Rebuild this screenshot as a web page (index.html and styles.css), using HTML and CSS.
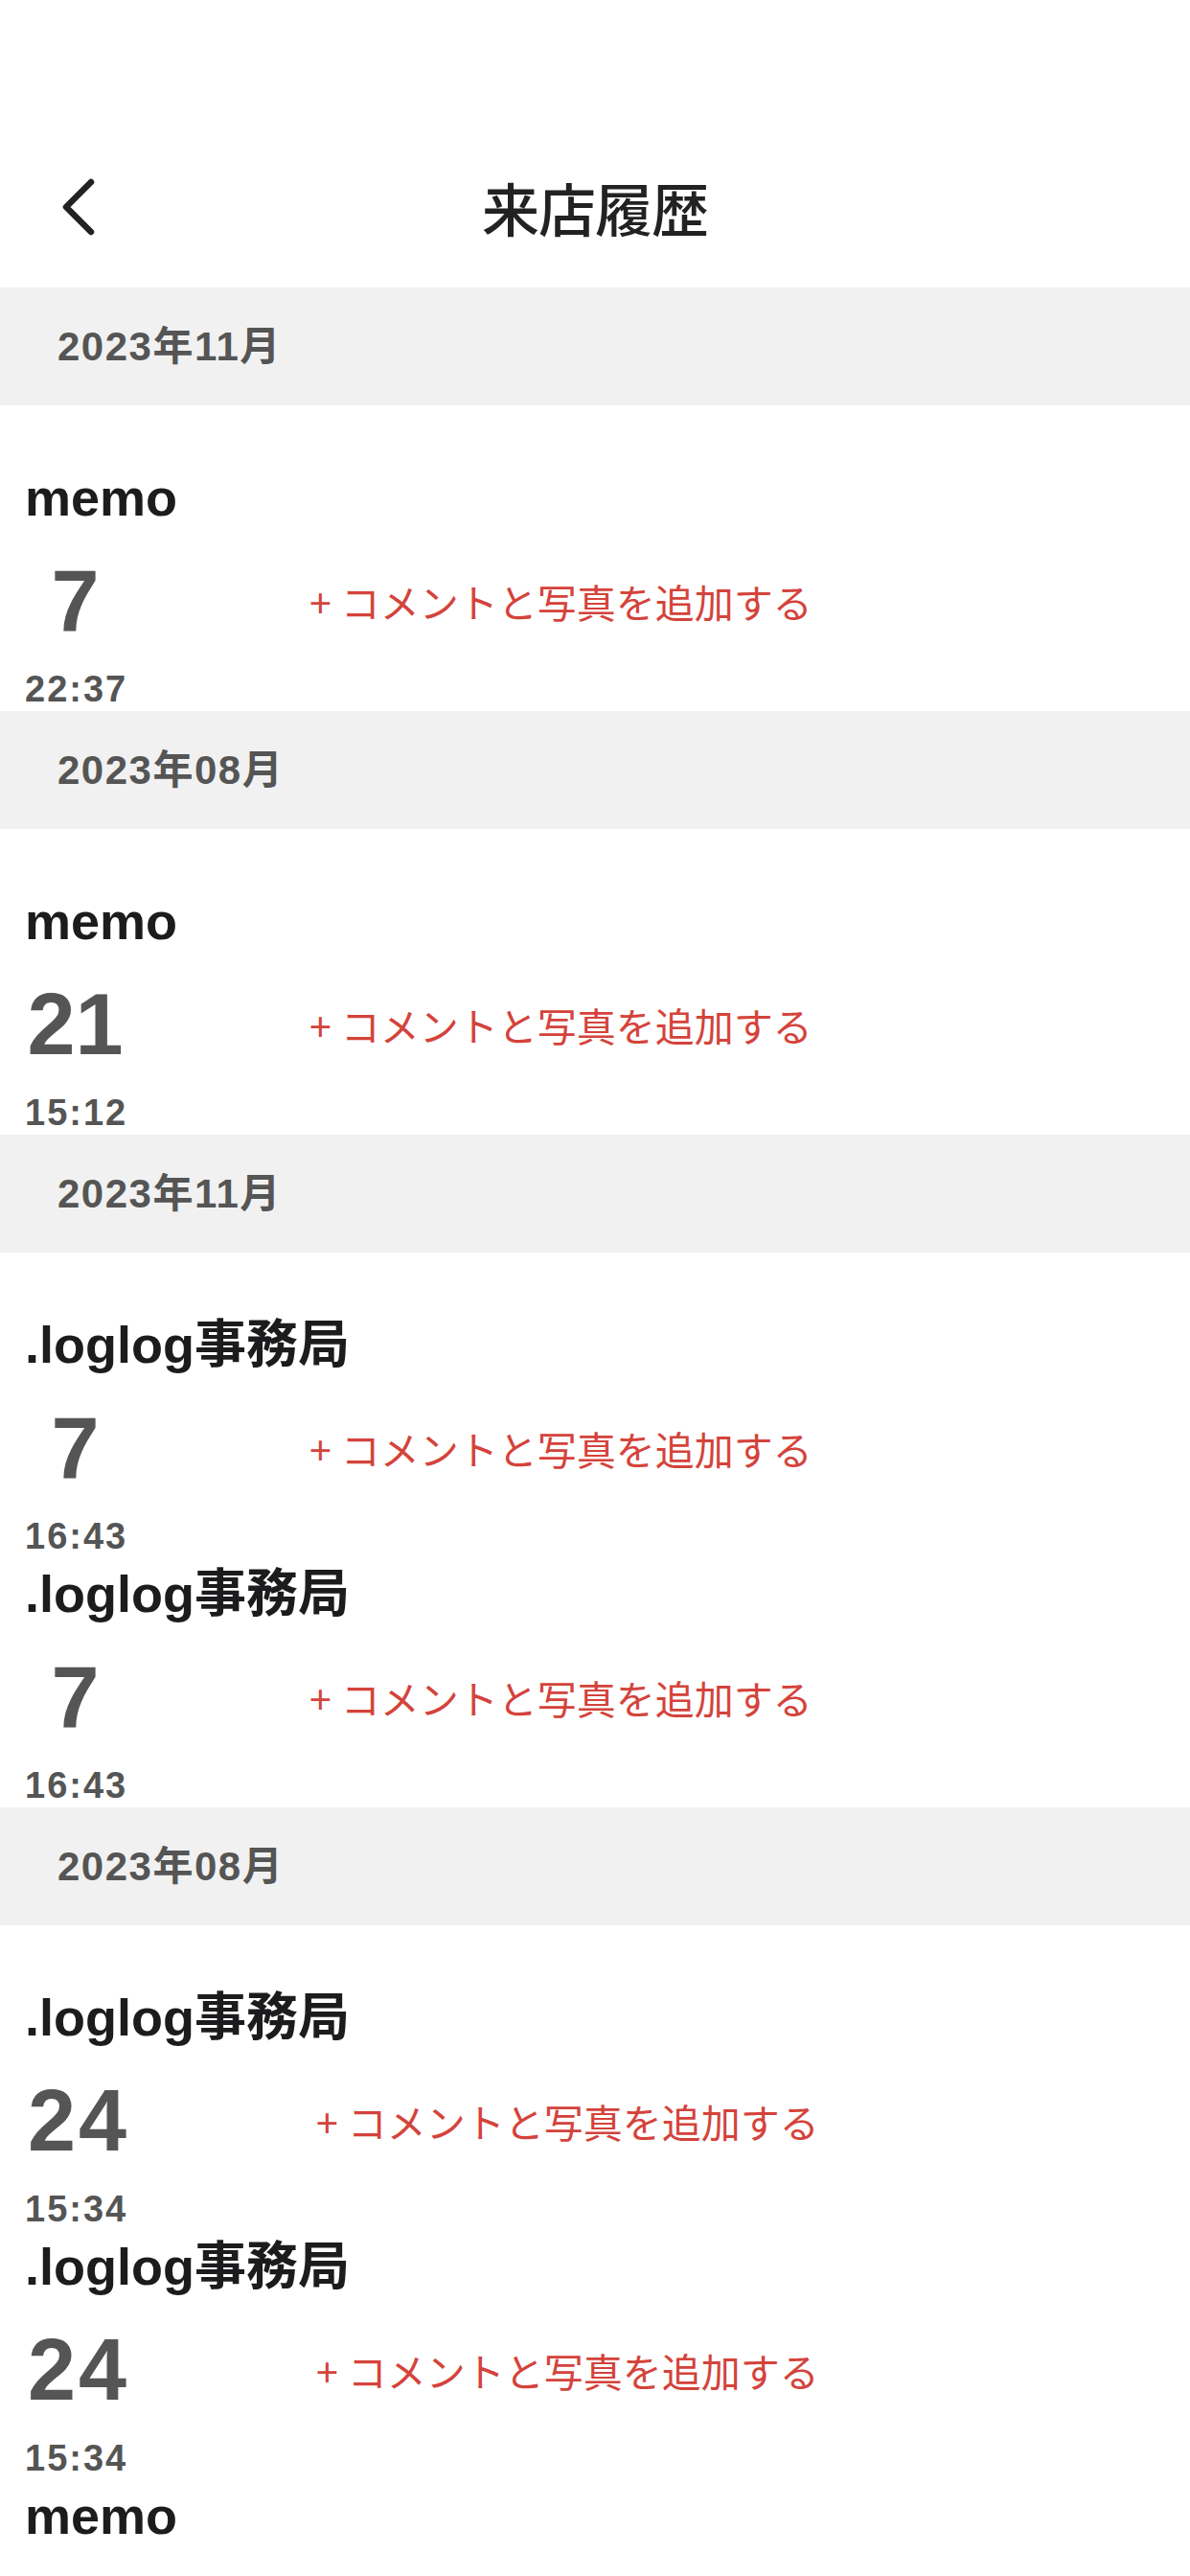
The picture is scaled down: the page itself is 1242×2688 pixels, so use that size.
FILE: index.html
```html
<!DOCTYPE html>
<html lang="ja">
<head>
<meta charset="utf-8">
<title>来店履歴</title>
<link rel="stylesheet" href="styles.css">
</head>
<body>
<header class="header">
  <div class="navbar">
    <button class="back" aria-label="戻る">
      <svg width="40" height="64" viewBox="0 0 40 64" fill="none">
        <path d="M33 6 L7 32 L33 58" stroke="#222" stroke-width="6.5" stroke-linecap="round" stroke-linejoin="round"/>
      </svg>
    </button>
    <h1 class="title">来店履歴</h1>
  </div>
</header>

<main class="list">
  <section class="section">
    <div class="month">2023年11月</div>
    <div class="entries">
      <div class="entry">
        <div class="name">memo</div>
        <div class="row"><div class="day">7</div><a class="add"><span class="plus">+</span>コメントと写真を追加する</a></div>
        <div class="time">22:37</div>
      </div>
    </div>
  </section>

  <section class="section">
    <div class="month">2023年08月</div>
    <div class="entries">
      <div class="entry">
        <div class="name">memo</div>
        <div class="row"><div class="day">21</div><a class="add"><span class="plus">+</span>コメントと写真を追加する</a></div>
        <div class="time">15:12</div>
      </div>
    </div>
  </section>

  <section class="section">
    <div class="month">2023年11月</div>
    <div class="entries">
      <div class="entry">
        <div class="name">.loglog事務局</div>
        <div class="row"><div class="day">7</div><a class="add"><span class="plus">+</span>コメントと写真を追加する</a></div>
        <div class="time">16:43</div>
      </div>
      <div class="entry">
        <div class="name">.loglog事務局</div>
        <div class="row"><div class="day">7</div><a class="add"><span class="plus">+</span>コメントと写真を追加する</a></div>
        <div class="time">16:43</div>
      </div>
    </div>
  </section>

  <section class="section">
    <div class="month">2023年08月</div>
    <div class="entries">
      <div class="entry">
        <div class="name">.loglog事務局</div>
        <div class="row"><div class="day wide">24</div><a class="add"><span class="plus">+</span>コメントと写真を追加する</a></div>
        <div class="time">15:34</div>
      </div>
      <div class="entry">
        <div class="name">.loglog事務局</div>
        <div class="row"><div class="day wide">24</div><a class="add"><span class="plus">+</span>コメントと写真を追加する</a></div>
        <div class="time">15:34</div>
      </div>
      <div class="entry">
        <div class="name">memo</div>
      </div>
    </div>
  </section>
</main>
</body>
</html>
```

FILE: styles.css
```css
* {
  box-sizing: border-box;
}

html, body {
  margin: 0;
  padding: 0;
  background: #ffffff;
}

body {
  width: 1242px;
  height: 2688px;
  overflow: hidden;
  font-family: "Liberation Sans", "Noto Sans CJK JP", sans-serif;
  color: #1c1c1e;
}

.header {
  height: 300px;
  padding-top: 150px;
}

.navbar {
  height: 132px;
  display: flex;
  align-items: center;
  justify-content: center;
  position: relative;
}

.back {
  position: absolute;
  left: 62px;
  top: 34px;
  width: 40px;
  height: 64px;
  padding: 0;
  border: 0;
  background: none;
  display: flex;
}

.title {
  margin: 0;
  font-family: "Noto Sans CJK JP", sans-serif;
  font-size: 60px;
  font-weight: 500;
  line-height: 132px;
  color: #222222;
  letter-spacing: -1px;
}

.month {
  height: 123px;
  background: #f1f1f1;
  padding-left: 60px;
  font-size: 42px;
  font-weight: 700;
  line-height: 123px;
  color: #555555;
  letter-spacing: 1.5px;
}

.entries {
  padding-top: 59px;
}

.entry {
  padding: 0 26px;
}

.name {
  font-size: 54px;
  font-weight: 700;
  line-height: 75px;
  color: #1c1c1e;
  white-space: nowrap;
}

.row {
  display: flex;
  align-items: center;
  margin-top: 20px;
}

.day {
  min-width: 105px;
  text-align: center;
  font-size: 90px;
  font-weight: 700;
  line-height: 100px;
  color: #555555;
}

.day.wide {
  min-width: 112px;
  letter-spacing: 3px;
}

.add {
  margin-left: 192px;
  font-family: "Noto Sans CJK JP", sans-serif;
  font-size: 41px;
  font-weight: 400;
  line-height: 60px;
  color: #d4433b;
  white-space: nowrap;
  text-decoration: none;
}

.plus {
  margin-right: 10px;
}

.time {
  margin-top: 19px;
  font-size: 38px;
  font-weight: 700;
  line-height: 46px;
  color: #555555;
  letter-spacing: 2px;
}
```
